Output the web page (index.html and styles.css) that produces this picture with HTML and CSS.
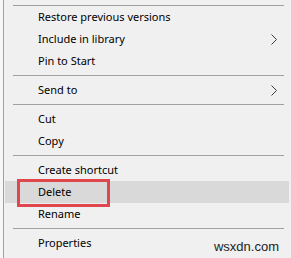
FILE: index.html
```html
<!DOCTYPE html>
<html>
<head>
<meta charset="utf-8">
<link rel="stylesheet" href="styles.css">
</head>
<body>
<div class="page">
  <div class="menu">
    <div class="sep sep-top"><div class="line"></div></div>
    <div class="item">Restore previous versions</div>
    <div class="item sub">Include in library<svg class="arrow" width="7" height="11" viewBox="0 0 7 11"><polyline points="0.5,0.5 5.5,5.5 0.5,10.5" fill="none" stroke="#3c3c3c" stroke-width="1"/></svg></div>
    <div class="item">Pin to Start</div>
    <div class="sep"><div class="line"></div></div>
    <div class="item sub">Send to<svg class="arrow" width="7" height="11" viewBox="0 0 7 11"><polyline points="0.5,0.5 5.5,5.5 0.5,10.5" fill="none" stroke="#3c3c3c" stroke-width="1"/></svg></div>
    <div class="sep"><div class="line"></div></div>
    <div class="item">Cut</div>
    <div class="item">Copy</div>
    <div class="sep"><div class="line"></div></div>
    <div class="item">Create shortcut</div>
    <div class="item hot">Delete<span class="mark"></span></div>
    <div class="item">Rename</div>
    <div class="sep"><div class="line"></div></div>
    <div class="item">Properties</div>
  </div>
  <div class="watermark">wsxdn.com</div>
</div>
</body>
</html>
```
FILE: styles.css
```css
html, body {
  margin: 0;
  padding: 0;
}
body {
  width: 291px;
  height: 258px;
  overflow: hidden;
  background: #f0f0f0;
  font-family: "Noto Sans", "Open Sans", sans-serif;
  font-size: 11px;
  color: #000;
}
.page {
  position: relative;
  height: 258px;
  padding-left: 3px;
  background: #f7f7f7;
}
.menu {
  height: 258px;
  background: #f0f0f0;
  border-left: 1px solid #a0a0a0;
  display: flex;
  flex-direction: column;
}
.sep {
  padding: 3px 7px 3px 9px;
}
.sep-top {
  padding-top: 5px;
  padding-bottom: 0;
}
.line {
  height: 1px;
  background: #a0a0a0;
}
.item {
  position: relative;
  height: 22px;
  line-height: 22px;
  padding-left: 33px;
  margin: 0 2px 0 1px;
  display: flex;
  align-items: center;
  white-space: nowrap;
}
.item.sub {
  justify-content: space-between;
  padding-right: 11px;
}
.arrow {
  display: block;
}
.hot {
  background: #d9d9d9;
}
.mark {
  position: absolute;
  left: 12px;
  top: -2px;
  width: 87px;
  height: 22px;
  border: 3px solid #e0474c;
}
.watermark {
  position: absolute;
  right: 12px;
  bottom: 4px;
  font-family: "Liberation Sans", Arial, sans-serif;
  font-size: 13px;
  color: #222;
}
```
